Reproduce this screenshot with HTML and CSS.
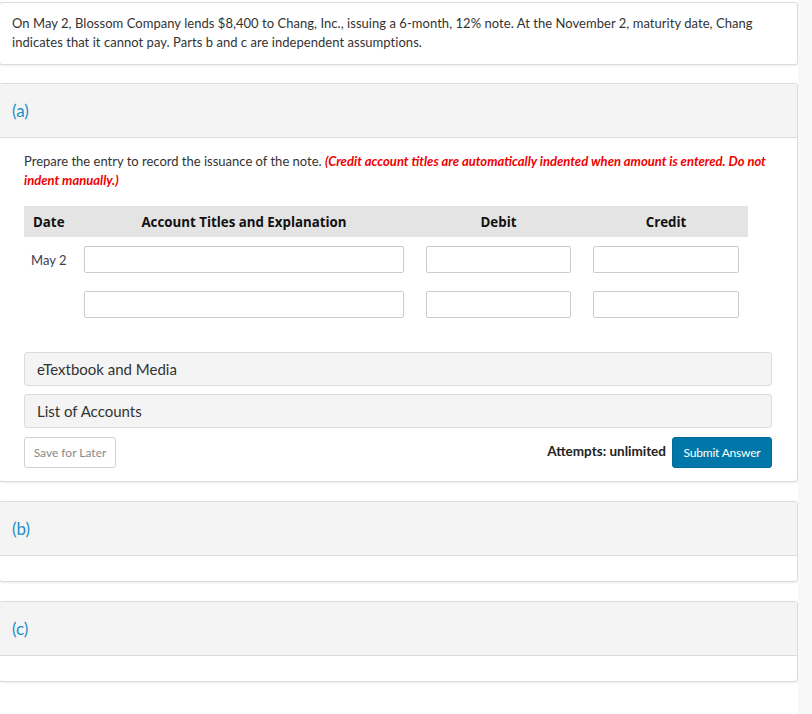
FILE: index.html
```html
<!DOCTYPE html>
<html lang="en">
<head>
<meta charset="utf-8">
<title>Question</title>
<link rel="stylesheet" href="styles.css">
</head>
<body>
<div class="page">
  <main class="content">
    <section class="card intro">
      <p>On May 2, Blossom Company lends $8,400 to Chang, Inc., issuing a 6-month, 12% note. At the November 2, maturity date, Chang indicates that it cannot pay. Parts b and c are independent assumptions.</p>
    </section>

    <section class="card part">
      <header class="part-head">(a)</header>
      <div class="part-body">
        <p class="instructions">Prepare the entry to record the issuance of the note. <em class="warn">(Credit account titles are automatically indented when amount is entered. Do not indent manually.)</em></p>

        <div class="journal">
          <div class="jhead">
            <span class="h-date">Date</span>
            <span class="h-center">Account Titles and Explanation</span>
            <span class="h-center">Debit</span>
            <span class="h-center">Credit</span>
          </div>
          <div class="jrow">
            <span class="date">May 2</span>
            <input class="field" type="text">
            <input class="field" type="text">
            <input class="field" type="text">
          </div>
          <div class="jrow">
            <span class="date"></span>
            <input class="field" type="text">
            <input class="field" type="text">
            <input class="field" type="text">
          </div>
        </div>

        <div class="panel">eTextbook and Media</div>
        <div class="panel">List of Accounts</div>

        <div class="actions">
          <button class="btn-save" type="button">Save for Later</button>
          <div class="submit-group">
            <span class="attempts">Attempts: unlimited</span>
            <button class="btn-submit" type="button">Submit Answer</button>
          </div>
        </div>
      </div>
    </section>

    <section class="card part">
      <header class="part-head">(b)</header>
      <div class="part-empty"></div>
    </section>

    <section class="card part">
      <header class="part-head">(c)</header>
      <div class="part-empty"></div>
    </section>
  </main>
  <div class="track"></div>
</div>
</body>
</html>
```

FILE: styles.css
```css
* { box-sizing: border-box; }

html, body {
  margin: 0;
  padding: 0;
  background: #ffffff;
  font-family: "Lato", "Liberation Sans", sans-serif;
  color: #333333;
}

.page {
  display: flex;
  min-height: 714px;
}

.content {
  width: 798px;
  padding-top: 2px;
  display: flex;
  flex-direction: column;
  gap: 19px;
}

.track {
  flex: 1;
  background: #f8f8f8;
}

.card {
  margin-left: -1px;
  width: 799px;
  background: #fff;
  border: 1px solid #dcdcdc;
  border-radius: 3px;
  box-shadow: 0 1px 2px rgba(0, 0, 0, 0.08);
}

.intro {
  margin-bottom: -1px;
}

.intro p {
  margin: 0;
  padding: 11px 12px 12px 12px;
  font-size: 13px;
  line-height: 19px;
  letter-spacing: 0.04px;
  color: #333;
}

.part-head {
  height: 54px;
  display: flex;
  align-items: center;
  padding-left: 12px;
  background: #f4f4f4;
  border-bottom: 1px solid #dcdcdc;
  color: #1c8fc7;
  font-size: 17px;
}

.part-empty {
  height: 25px;
}

.part-body {
  padding: 14px 25px 13px 24px;
}

.instructions {
  margin: 0;
  font-size: 13px;
  line-height: 19px;
  color: #333;
}

.warn {
  color: #f00000;
  font-weight: 700;
  font-style: italic;
}

.journal {
  margin-top: 16px;
  width: 724px;
}

.jhead,
.jrow {
  display: grid;
  grid-template-columns: 38px 320px 145px 146px;
  column-gap: 22px;
  align-items: center;
}

.jhead {
  height: 31px;
  background: #e4e4e4;
  font-family: "Open Sans", "DejaVu Sans", sans-serif;
  font-weight: 700;
  font-size: 13.3px;
  color: #111;
}

.h-date {
  padding-left: 9px;
  white-space: nowrap;
}

.h-center {
  text-align: center;
}

.jrow {
  margin-top: 9px;
}

.jrow + .jrow {
  margin-top: 18px;
}

.date {
  padding-left: 7px;
  font-size: 13px;
  color: #3c3c50;
  white-space: nowrap;
}

.field {
  height: 27px;
  width: 100%;
  border: 1px solid #cccccc;
  border-radius: 2px;
  background: #fff;
  margin: 0;
  font: inherit;
}

.panel {
  margin-top: 8px;
  height: 34px;
  display: flex;
  align-items: center;
  padding-left: 12px;
  background: #f4f4f4;
  border: 1px solid #dcdcdc;
  border-radius: 3px;
  font-size: 15px;
  color: #333;
}

.journal + .panel {
  margin-top: 34px;
}

.actions {
  margin-top: 9px;
  display: flex;
  justify-content: space-between;
  align-items: center;
}

.btn-save {
  width: 92px;
  height: 31px;
  background: #fff;
  border: 1px solid #d0d0d0;
  border-radius: 3px;
  font-family: "Lato", sans-serif;
  font-size: 12px;
  color: #8a8a8a;
  padding: 0;
}

.submit-group {
  display: flex;
  align-items: center;
  gap: 6px;
}

.attempts {
  font-size: 13.5px;
  font-weight: 700;
  color: #222;
  position: relative;
  top: -2px;
}

.btn-submit {
  width: 100px;
  height: 31px;
  background: #0077a9;
  border: 1px solid #006b98;
  border-radius: 3px;
  color: #fff;
  font-family: "Lato", sans-serif;
  font-size: 12px;
  padding: 0;
  letter-spacing: -0.2px;
}
```
